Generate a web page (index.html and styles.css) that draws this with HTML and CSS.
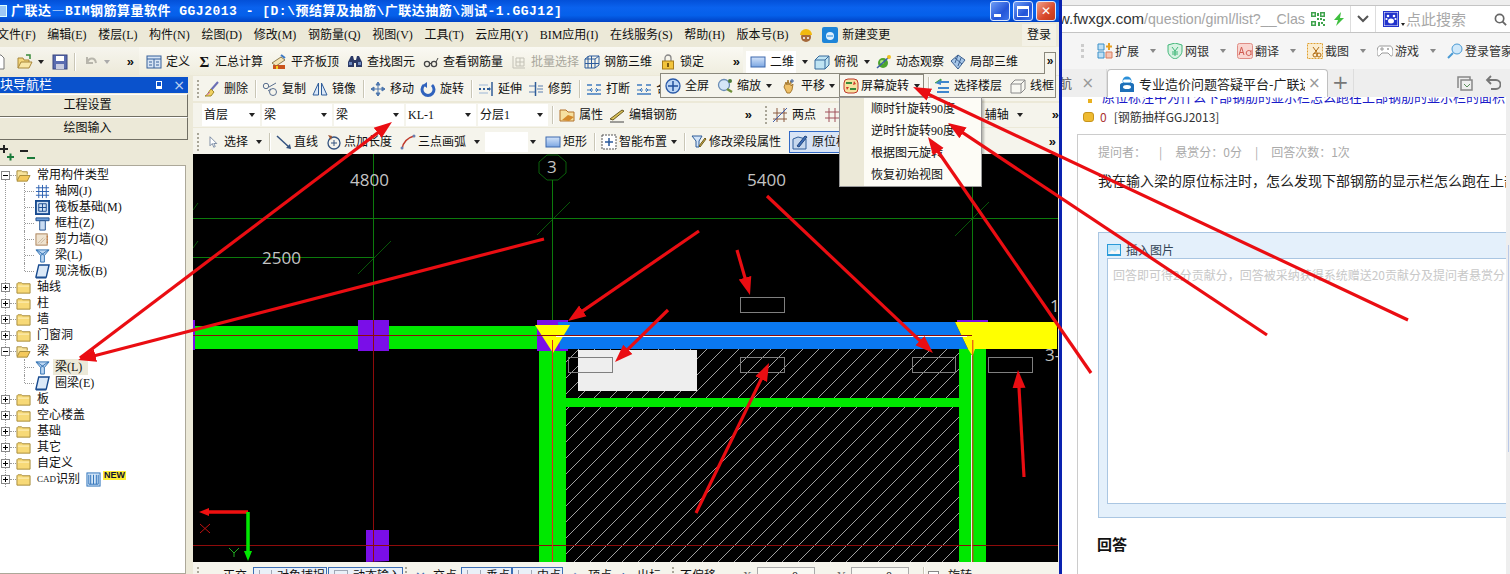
FILE: index.html
```html
<!DOCTYPE html>
<html lang="zh-CN">
<head>
<meta charset="utf-8">
<title>广联达钢筋算量软件</title>
<link rel="stylesheet" href="styles.css">
</head>
<body>
<svg class="sprite" xmlns="http://www.w3.org/2000/svg">
<defs>
<symbol id="i-doc" viewBox="0 0 16 16"><path d="M3 1h7l3 3v11H3z" fill="#fff" stroke="#777"/></symbol>
<symbol id="i-open" viewBox="0 0 16 16"><path d="M1 14V4h5l1 2h5v2" fill="#f4d67a" stroke="#a8873a"/><path d="M1 14l3-6h11l-3 6z" fill="#f9e7a6" stroke="#a8873a"/><path d="M9 1l4 0 0 4" fill="none" stroke="#3a8a3a" stroke-width="1.5"/></symbol>
<symbol id="i-save" viewBox="0 0 16 16"><rect x="1" y="1" width="14" height="14" fill="#5a6cb0" stroke="#38457e"/><rect x="4" y="2" width="8" height="5" fill="#fff"/><rect x="4" y="10" width="8" height="5" fill="#c7cbe0"/></symbol>
<symbol id="i-undo" viewBox="0 0 16 16"><path d="M4 3v6h6" fill="none" stroke="#b8b6ac" stroke-width="2"/><path d="M4 9c2-6 8-6 9 0" fill="none" stroke="#b8b6ac" stroke-width="2"/></symbol>
<symbol id="i-def" viewBox="0 0 16 16"><rect x="1" y="2" width="14" height="12" fill="#d6e4f5" stroke="#37609a"/><path d="M1 5h14M8 5v9M3 8h3M3 11h3M10 8h3M10 11h3" stroke="#37609a" fill="none"/></symbol>
<symbol id="i-align" viewBox="0 0 16 16"><path d="M1 9l9-6 4 3-9 6z" fill="#f3e4b5" stroke="#8a7a50"/><rect x="2" y="11" width="12" height="4" fill="#c9541c"/><path d="M10 1l4 3" stroke="#3b79c4" stroke-width="2"/><rect x="5" y="12" width="2" height="3" fill="#f4d020"/></symbol>
<symbol id="i-find" viewBox="0 0 16 16"><path d="M2 6l2-4h2l1 4v7H1V8zM14 6l-2-4h-2L9 6v7h6V8z" fill="#2c3a66"/><rect x="7" y="6" width="2" height="3" fill="#2c3a66"/><rect x="2" y="8" width="3" height="3" fill="#6f8bc0"/><rect x="11" y="8" width="3" height="3" fill="#6f8bc0"/></symbol>
<symbol id="i-glass" viewBox="0 0 16 16"><circle cx="4" cy="10" r="2.6" fill="none" stroke="#444" stroke-width="1.3"/><circle cx="11" cy="10" r="2.6" fill="none" stroke="#444" stroke-width="1.3"/><path d="M6.5 9.5h2M13 8l2-4" stroke="#444" fill="none"/></symbol>
<symbol id="i-batch" viewBox="0 0 16 16"><path d="M2 2v12h12M5 4h8v8H5zM9 4v8M5 8h8" fill="none" stroke="#c3c1b6"/></symbol>
<symbol id="i-r3d" viewBox="0 0 16 16"><path d="M1 5l4-3h10v9l-4 3H1zM1 5h10v9M11 5l4-3M4 2v12M7.500 2v12M1 9.500h14" fill="none" stroke="#2d5c9c"/></symbol>
<symbol id="i-lock" viewBox="0 0 16 16"><path d="M5 7V4a3 3 0 0 1 6 0v3" fill="none" stroke="#888" stroke-width="1.300"/><rect x="2.500" y="7" width="11" height="8" fill="#f2c43c" stroke="#a67b18"/><rect x="7" y="9" width="2" height="4" fill="#7a5a10"/></symbol>
<symbol id="i-rect" viewBox="0 0 16 16"><defs><linearGradient id="gr" x1="0" y1="0" x2="0" y2="1"><stop offset="0" stop-color="#d4e4f9"/><stop offset="1" stop-color="#7ba6e2"/></linearGradient></defs><rect x="1" y="3" width="14" height="10" fill="url(#gr)" stroke="#3d68ad"/></symbol>
<symbol id="i-cube" viewBox="0 0 16 16"><path d="M1 6l4-4h10v9l-4 4H1z" fill="#bfe3f2" stroke="#366a9c"/><path d="M1 6h10v9M11 6l4-4" fill="none" stroke="#366a9c"/></symbol>
<symbol id="i-orbit" viewBox="0 0 16 16"><circle cx="7" cy="9" r="5" fill="#4ea52e"/><circle cx="6" cy="8" r="2" fill="#b4e68a"/><path d="M1 14L13 3" stroke="#3b5ea8" stroke-width="1.500"/><circle cx="13" cy="3" r="2" fill="#f0c020"/></symbol>
<symbol id="i-local" viewBox="0 0 16 16"><path d="M1 7l7-6 7 5-7 9z" fill="#a7c7e8" stroke="#3c5f8f"/><path d="M5 4l7 6M8 1l-3 8M11 4l-3 8" stroke="#3c5f8f" fill="none"/></symbol>
<symbol id="i-del" viewBox="0 0 16 16"><path d="M14 1L7 9" stroke="#6b6fb5" stroke-width="2"/><path d="M7 8l3 3-3 4H1c3-1 3-4 6-7z" fill="#f0d060" stroke="#a18a2c"/><path d="M3 14l3-3" stroke="#d06ad0"/></symbol>
<symbol id="i-copy" viewBox="0 0 16 16"><circle cx="4" cy="5" r="2.700" fill="none" stroke="#5a6f8f"/><circle cx="11" cy="11" r="3.500" fill="none" stroke="#5a6f8f"/><path d="M7 6l7-4M6 10l3-2" stroke="#5a6f8f" fill="none"/></symbol>
<symbol id="i-mirror" viewBox="0 0 16 16"><path d="M6.500 2v12H1zM9.500 2v12H15z" fill="#dbe8f8" stroke="#2f5d99"/></symbol>
<symbol id="i-move" viewBox="0 0 16 16"><path d="M8 1v14M1 8h14M8 1L6 4h4zM8 15l-2-3h4zM1 8l3-2v4zM15 8l-3-2v4z" fill="#4d76ad" stroke="#4d76ad"/></symbol>
<symbol id="i-rot" viewBox="0 0 16 16"><path d="M4 4a6 6 0 1 0 8 0" fill="none" stroke="#2f62bd" stroke-width="3"/><path d="M7 1v6L3 4z" fill="#2f62bd"/></symbol>
<symbol id="i-ext" viewBox="0 0 16 16"><path d="M1 8h2M5 8h2M9 8h2" stroke="#2f5d99" stroke-width="2"/><path d="M11 6l2 2-2 2z" fill="#2f5d99"/><path d="M14 1v14" stroke="#2f5d99" stroke-width="1.500"/><path d="M1 4h9M1 12h9" stroke="#9cb6d6"/></symbol>
<symbol id="i-trim" viewBox="0 0 16 16"><path d="M1 5h6M1 11h6M9 8h6M10 5h5M10 11h5" stroke="#5a7fb0"/><path d="M7.500 1v14" stroke="#2f5d99" stroke-width="1.500"/></symbol>
<symbol id="i-brk" viewBox="0 0 16 16"><path d="M1 4h5M10 4h5M1 13h14" stroke="#3f7bc0" stroke-width="1.500"/><path d="M1 9h6M9 9h6M6 7l-2 2 2 2M10 7l2 2-2 2" stroke="#3f7bc0" fill="none"/></symbol>
<symbol id="i-prop" viewBox="0 0 16 16"><path d="M1 14V3h6l2 2h6v9z" fill="#f6e0a0" stroke="#b3722c"/><path d="M3 13l6-5 6 2-5 4z" fill="#d48a2c"/></symbol>
<symbol id="i-pen" viewBox="0 0 16 16"><path d="M1 12l3 1L15 4l-2-1z" fill="#d8c15a" stroke="#6a5a20"/><path d="M1 15h14" stroke="#444"/></symbol>
<symbol id="i-two" viewBox="0 0 16 16"><path d="M5 1v14M12 1v14M1 6h14M1 12h14" stroke="#8a5a40" fill="none"/><path d="M1 15L15 1" stroke="#4060b0"/></symbol>
<symbol id="i-hash" viewBox="0 0 16 16"><path d="M5 1v14M11 1v14M1 5h14M1 11h14" stroke="#a0505a" fill="none"/></symbol>
<symbol id="i-cur" viewBox="0 0 16 16"><path d="M4 1v12l3-3 2 5 2-1-2-4h4z" fill="#fff" stroke="#5a6f8f"/></symbol>
<symbol id="i-line" viewBox="0 0 16 16"><path d="M1 2l13 12" stroke="#33527f" stroke-width="1.500"/><path d="M15 15l-5-1 4-4z" fill="#33527f"/></symbol>
<symbol id="i-plen" viewBox="0 0 16 16"><circle cx="8" cy="9" r="6" fill="none" stroke="#33527f" stroke-width="1.300"/><path d="M8 6v6M5 9h6" stroke="#33527f"/><path d="M2 1l4 1-1 4z" fill="#a0522d"/></symbol>
<symbol id="i-arc" viewBox="0 0 16 16"><path d="M2 15C3 8 7 4 14 2" fill="none" stroke="#c0392b" stroke-width="1.500"/><circle cx="2" cy="14" r="1.500" fill="#6a7fb0"/><circle cx="14" cy="2" r="1.500" fill="#6a7fb0"/></symbol>
<symbol id="i-smart" viewBox="0 0 16 16"><rect x="1" y="1" width="14" height="14" fill="#fff" stroke="#555" stroke-dasharray="2 1"/><path d="M8 4v8M4 8h8" stroke="#2a5a9c" stroke-width="1.500"/></symbol>
<symbol id="i-mod" viewBox="0 0 16 16"><path d="M1 2h10L8 7v6H5V7z" fill="#d2e4f8" stroke="#2f5d99"/><path d="M8 12l6-8 1 1-6 8z" fill="#d8b54a" stroke="#6a5a20"/></symbol>
<symbol id="i-orig" viewBox="0 0 16 16"><path d="M1 5l5-2 8 2v10H1z" fill="#c7d8ee" stroke="#2f5d99"/><path d="M5 12l8-10 2 1-8 10z" fill="#3f6fb8" stroke="#23487f"/></symbol>
<symbol id="i-full" viewBox="0 0 16 16"><circle cx="8" cy="8" r="7" fill="#bcd6f5" stroke="#2a5aa8" stroke-width="1.300"/><path d="M8 3v10M3 8h10" stroke="#1f4f9c" stroke-width="1.500"/></symbol>
<symbol id="i-zoom" viewBox="0 0 16 16"><circle cx="7" cy="7" r="5.500" fill="#d4e6f7" stroke="#6a8db5" stroke-width="1.300"/><path d="M10 11l5 3" stroke="#6f8f3a" stroke-width="2.500"/><circle cx="13" cy="3" r="2" fill="#4a7a3a"/></symbol>
<symbol id="i-pan" viewBox="0 0 16 16"><path d="M3 9l2-5 1 3 1-5 1 5 2-4v5l2-2-1 6-2 3H6z" fill="#efc067" stroke="#a67a30"/><path d="M11 1v4M9 3h4" stroke="#3a5f99"/></symbol>
<symbol id="i-srot" viewBox="0 0 16 16"><rect x="1" y="1" width="14" height="14" rx="4" fill="#f6e3a0" stroke="#c0392b"/><path d="M3 5h6M13 11H7" stroke="#3b8a3b" stroke-width="2"/><path d="M11 3l2 3-3 1zM4 12l-1-3 3 0z" fill="#d23a2a"/></symbol>
<symbol id="i-floor" viewBox="0 0 16 16"><path d="M1 5l6-4v2h8v2H7v2zM4 9h11v2H4zM3 13h12v2H3z" fill="#3f86cc"/><path d="M1 5l6-4v2" fill="none" stroke="#3f9f3f"/></symbol>
<symbol id="i-wire" viewBox="0 0 16 16"><path d="M1 6l4-4h10v9l-4 4H1zM1 6h10v9M11 6l4-4" fill="#f8f8f2" stroke="#8a8a8a"/></symbol>
<symbol id="i-folder" viewBox="0 0 16 16"><path d="M1 4l1-1h4l1 1h8v10H1z" fill="#f7d977" stroke="#a58a3a"/><path d="M2 6h12v1H2z" fill="#fdf2c4"/></symbol>
<symbol id="i-folderopen" viewBox="0 0 16 16"><path d="M1 13V3h5l1 1h5v3" fill="#f7e39c" stroke="#a58a3a"/><path d="M1 14l3-6h11l-3 6z" fill="#f4c95c" stroke="#a58a3a"/></symbol>
<symbol id="i-gridt" viewBox="0 0 16 16"><path d="M1 4h14M1 8h14M1 12h14M4 1v14M8 1v14M12 1v14" stroke="#2a5fb0" fill="none"/></symbol>
<symbol id="i-raft" viewBox="0 0 16 16"><rect x="1" y="1" width="14" height="14" fill="#cfe0f4" stroke="#174a8f" stroke-width="2"/><path d="M4 4h8v8H4zM8 4v8M4 8h8" fill="none" stroke="#174a8f"/></symbol>
<symbol id="i-col" viewBox="0 0 16 16"><path d="M1 2h14v3H1z" fill="#6a9bd8" stroke="#1f4f8f"/><path d="M5 5h6v10H5z" fill="#c9dcf3" stroke="#1f4f8f"/></symbol>
<symbol id="i-wall" viewBox="0 0 16 16"><rect x="1" y="2" width="12" height="12" fill="#efe3d0" stroke="#a97f55"/><path d="M3 12l6-6M6 12l5-5" stroke="#c8b8a0"/><path d="M13 4v9" stroke="#c06a2a" stroke-dasharray="2 1"/></symbol>
<symbol id="i-beam" viewBox="0 0 16 16"><path d="M1 2h14l-5 6v7H6V8z" fill="#bcd7f3" stroke="#2f6fb0"/><path d="M6 8l8-6M10 8L2 2" stroke="#2f6fb0" fill="none"/></symbol>
<symbol id="i-slab" viewBox="0 0 16 16"><path d="M4 1h11l-3 13H1z" fill="#dbe9f8" stroke="#174a8f" stroke-width="1.500"/><path d="M1 14h11v1.500H1z" fill="#174a8f"/></symbol>
<symbol id="i-book" viewBox="0 0 16 16"><rect x="1" y="1" width="14" height="14" fill="#d3e6f8" stroke="#2a6fb8"/><path d="M5 3v10M8 3v10M11 3v10M3 3v10h10V3" stroke="#2a6fb8" fill="none"/></symbol>
</defs>
</svg>

<div class="page">
  <div class="app">
    <div class="titlebar">
      <span class="title-logo"></span>
      <span class="title-text">广联达<span class="dash">—</span>BIM钢筋算量软件 GGJ2013 - [D:\预结算及抽筋\广联达抽筋\测试-1.GGJ12]</span>
      <span class="winbtns">
        <span class="winbtn"><span class="gl-min"></span></span>
        <span class="winbtn"><span class="gl-max"></span></span>
        <span class="winbtn close">✕</span>
      </span>
    </div>

    <div class="menubar">
      <span class="mi first">文件(F)</span><span class="mi">编辑(E)</span><span class="mi">楼层(L)</span><span class="mi">构件(N)</span><span class="mi">绘图(D)</span><span class="mi">修改(M)</span><span class="mi">钢筋量(Q)</span><span class="mi">视图(V)</span><span class="mi">工具(T)</span><span class="mi">云应用(Y)</span><span class="mi">BIM应用(I)</span><span class="mi">在线服务(S)</span><span class="mi">帮助(H)</span><span class="mi">版本号(B)</span>
      <svg class="helmet" viewBox="0 0 16 16"><circle cx="8" cy="10" r="5" fill="#a5683a"/><path d="M2 8a6 6 0 0 1 12 0z" fill="#f2b90f"/><circle cx="6" cy="11" r="1" fill="#fff"/><circle cx="10" cy="11" r="1" fill="#fff"/></svg>
      <svg class="cloud" viewBox="0 0 16 16"><rect width="16" height="16" rx="2" fill="#1d84d8"/><circle cx="8" cy="9" r="4" fill="#dff1ff"/><path d="M5 9h6" stroke="#1d84d8"/></svg>
      <span class="mi-plain">新建变更</span>
      <span class="login">登录</span>
    </div>

    <div class="toolrow">
      <div class="ts ts-file">
        <svg class="ic clip-doc"><use href="#i-doc"/></svg>
        <svg class="ic"><use href="#i-open"/></svg><i class="dd"></i>
        <svg class="ic ic-save"><use href="#i-save"/></svg>
        <i class="sep"></i>
        <svg class="ic"><use href="#i-undo"/></svg><i class="dd off"></i>
        <b class="more push">»</b>
      </div>
      <div class="ts ts-main">
        <span class="it"><svg class="ic"><use href="#i-def"/></svg>定义</span>
        <span class="it"><b class="sigma">Σ</b>汇总计算</span>
        <span class="it"><svg class="ic"><use href="#i-align"/></svg>平齐板顶</span>
        <span class="it"><svg class="ic"><use href="#i-find"/></svg>查找图元</span>
        <span class="it"><svg class="ic"><use href="#i-glass"/></svg>查看钢筋量</span>
        <span class="it off"><svg class="ic"><use href="#i-batch"/></svg>批量选择</span>
        <span class="it tight"><svg class="ic"><use href="#i-r3d"/></svg>钢筋三维</span>
        <span class="it"><svg class="ic"><use href="#i-lock"/></svg>锁定</span>
        <b class="more push">»</b>
      </div>
      <div class="ts ts-view">
        <span class="it boxed"><svg class="ic"><use href="#i-rect"/></svg>二维</span><i class="dd"></i>
        <span class="it"><svg class="ic"><use href="#i-cube"/></svg>俯视</span><i class="dd"></i>
        <span class="it"><svg class="ic"><use href="#i-orbit"/></svg>动态观察</span>
        <span class="it"><svg class="ic"><use href="#i-local"/></svg>局部三维</span>
      </div>
    </div>

    <div class="main">
      <aside class="side">
        <div class="side-head"><span>块导航栏</span><span class="side-ctl"><i class="pin"></i><span class="side-x">×</span></span></div>
        <div class="side-btn first-btn">工程设置</div>
        <div class="side-btn">绘图输入</div>
        <div class="side-tools">
          <svg class="pm" viewBox="0 0 36 18"><path d="M0 5h8M4 1v8" stroke="#222" stroke-width="2"/><path d="M7 13h7M10.500 9.500v7" stroke="#1a7a3a" stroke-width="2"/><path d="M20 7h8" stroke="#222" stroke-width="2"/><path d="M27 14h8" stroke="#1a7a3a" stroke-width="2"/></svg>
        </div>
        <div class="tree">
          <div class="tr"><i class="exp minus"></i><svg class="ic fd"><use href="#i-folderopen"/></svg>常用构件类型</div>
          <div class="tr kid"><svg class="ic"><use href="#i-gridt"/></svg>轴网(J)</div>
          <div class="tr kid"><svg class="ic"><use href="#i-raft"/></svg>筏板基础(M)</div>
          <div class="tr kid"><svg class="ic"><use href="#i-col"/></svg>框柱(Z)</div>
          <div class="tr kid"><svg class="ic"><use href="#i-wall"/></svg>剪力墙(Q)</div>
          <div class="tr kid"><svg class="ic"><use href="#i-beam"/></svg>梁(L)</div>
          <div class="tr kid last"><svg class="ic"><use href="#i-slab"/></svg>现浇板(B)</div>
          <div class="tr"><i class="exp"></i><svg class="ic fd"><use href="#i-folder"/></svg>轴线</div>
          <div class="tr"><i class="exp"></i><svg class="ic fd"><use href="#i-folder"/></svg>柱</div>
          <div class="tr"><i class="exp"></i><svg class="ic fd"><use href="#i-folder"/></svg>墙</div>
          <div class="tr"><i class="exp"></i><svg class="ic fd"><use href="#i-folder"/></svg>门窗洞</div>
          <div class="tr"><i class="exp minus"></i><svg class="ic fd"><use href="#i-folderopen"/></svg>梁</div>
          <div class="tr kid"><svg class="ic"><use href="#i-beam"/></svg><span class="tsel">梁(L)</span></div>
          <div class="tr kid last"><svg class="ic"><use href="#i-slab"/></svg>圈梁(E)</div>
          <div class="tr"><i class="exp"></i><svg class="ic fd"><use href="#i-folder"/></svg>板</div>
          <div class="tr"><i class="exp"></i><svg class="ic fd"><use href="#i-folder"/></svg>空心楼盖</div>
          <div class="tr"><i class="exp"></i><svg class="ic fd"><use href="#i-folder"/></svg>基础</div>
          <div class="tr"><i class="exp"></i><svg class="ic fd"><use href="#i-folder"/></svg>其它</div>
          <div class="tr"><i class="exp"></i><svg class="ic fd"><use href="#i-folder"/></svg>自定义</div>
          <div class="tr"><i class="exp"></i><svg class="ic fd"><use href="#i-folder"/></svg><span class="cad-abbr">CAD</span>识别<svg class="ic book"><use href="#i-book"/></svg><span class="newb">NEW</span></div>
        </div>
      </aside>

      <section class="work">
        <div class="row row-a">
          <i class="grip"></i>
          <span class="it"><svg class="ic"><use href="#i-del"/></svg>删除</span><i class="sep"></i>
          <span class="it"><svg class="ic"><use href="#i-copy"/></svg>复制</span>
          <span class="it"><svg class="ic"><use href="#i-mirror"/></svg>镜像</span><i class="sep"></i>
          <span class="it"><svg class="ic"><use href="#i-move"/></svg>移动</span>
          <span class="it"><svg class="ic"><use href="#i-rot"/></svg>旋转</span><i class="sep"></i>
          <span class="it"><svg class="ic"><use href="#i-ext"/></svg>延伸</span>
          <span class="it"><svg class="ic"><use href="#i-trim"/></svg>修剪</span><i class="sep"></i>
          <span class="it"><svg class="ic"><use href="#i-brk"/></svg>打断</span>
          <span class="it"><svg class="ic"><use href="#i-brk"/></svg>合并</span>
        </div>

        <div class="row row-b">
          <div class="rs rs-left">
            <span class="sel">首层<i class="dd"></i></span>
            <span class="sel">梁<i class="dd"></i></span>
            <span class="sel">梁<i class="dd"></i></span>
            <span class="sel">KL-1<i class="dd"></i></span>
            <span class="sel">分层1<i class="dd"></i></span>
            <i class="sep"></i>
            <span class="it"><svg class="ic"><use href="#i-prop"/></svg>属性</span>
            <span class="it"><svg class="ic"><use href="#i-pen"/></svg>编辑钢筋</span>
            <b class="more push">»</b>
          </div>
          <div class="rs rs-right">
            <i class="grip"></i>
            <span class="it"><svg class="ic"><use href="#i-two"/></svg>两点</span>
            <svg class="ic"><use href="#i-hash"/></svg>
            <span class="it push">辅轴</span><i class="dd"></i>
            <b class="more edge-more">»</b>
          </div>
        </div>

        <div class="row row-c">
          <i class="grip"></i>
          <span class="it narrow"><svg class="ic"><use href="#i-cur"/></svg>选择</span><i class="dd"></i><i class="sep"></i>
          <span class="it"><svg class="ic"><use href="#i-line"/></svg>直线</span>
          <span class="it"><svg class="ic"><use href="#i-plen"/></svg>点加长度</span>
          <span class="it"><svg class="ic"><use href="#i-arc"/></svg>三点画弧</span><i class="dd"></i>
          <span class="blank"></span><i class="dd"></i>
          <span class="it"><svg class="ic"><use href="#i-rect"/></svg>矩形</span><i class="sep"></i>
          <span class="it"><svg class="ic"><use href="#i-smart"/></svg>智能布置</span><i class="dd dd-near"></i><i class="sep"></i>
          <span class="it"><svg class="ic"><use href="#i-mod"/></svg>修改梁段属性</span>
          <span class="it active"><svg class="ic"><use href="#i-orig"/></svg>原位标注</span>
          <b class="more push">»</b>
        </div>

        <svg class="cad" viewBox="193 154 865 408" xmlns="http://www.w3.org/2000/svg">
          <defs>
            <pattern id="hatch" width="16" height="16" patternUnits="userSpaceOnUse"><path d="M-1 17L17 -1" stroke="#c8c8c8" stroke-width=".8"/></pattern>
          </defs>
          <rect x="193" y="154" width="865" height="408" fill="#000"/>
          <g stroke="#0c7a0c" fill="none">
            <path d="M193 218.500H1058M193 257.500H373M373.500 154V320M552.500 180V320M972.500 154V320"/>
            <path d="M547 155h11l8 7v11l-8 7h-11l-8-7v-11z" stroke-width=".8"/>
          </g>
          <path d="M537 235l33-33M358 274l33-33M955 236l34-34M193 210l5-7M193 248l5-7" stroke="#0c7a0c" stroke-width=".7" fill="none"/>
          <g class="cad-num">
            <text x="350" y="186">4800</text>
            <text x="262" y="264">2500</text>
            <text x="747" y="186">5400</text>
            <text x="547" y="173">3</text>
            <text x="1050" y="312">1</text>
            <text x="1045" y="361">3-</text>
          </g>
          <rect x="566" y="349" width="393" height="213" fill="url(#hatch)"/>
          <rect x="578" y="350" width="119" height="41" fill="#eee"/>
          <g fill="#00e800">
            <rect x="195" y="326" width="342" height="23"/>
            <rect x="539" y="349" width="27" height="213"/>
            <rect x="959" y="349" width="27" height="213"/>
            <rect x="566" y="398" width="393" height="9"/>
          </g>
          <g fill="#7a0ee8">
            <rect x="193" y="320" width="2" height="30"/>
            <rect x="358" y="320" width="31" height="31"/>
            <rect x="537" y="320" width="31" height="31"/>
            <rect x="957" y="320" width="31" height="2"/>
            <path d="M366 530h23v31l-23 1z"/>
          </g>
          <path d="M558 322H955L968 349H560z" fill="#0a78f0"/>
          <path d="M955 322H1057V349H975L972.500 356 968 349z" fill="#ff0"/>
          <path d="M535 325H570L553 353z" fill="#ff0"/>
          <path d="M556 336.500H967" stroke="#fff" stroke-width="1"/>
          <g fill="none" stroke="#8e0b0b">
            <path d="M193 545.500H1058M373.500 320V562M193 335.500H972"/>
          </g>
          <path d="M552.500 340V562M972.800 340V562" stroke="#e02a1a"/>
          <path d="M971.500 355V562" stroke="#eee"/>
          <g fill="none" stroke="#7f7f7f">
            <rect x="740.500" y="297.500" width="44" height="15"/>
            <rect x="568.500" y="357.500" width="44" height="15"/>
            <rect x="740.500" y="357.500" width="44" height="15"/>
            <rect x="912.500" y="357.500" width="43" height="15"/>
            <rect x="988.500" y="357.500" width="44" height="15"/>
          </g>
          <path d="M248 512H208" stroke="#f01010" stroke-width="3.500"/>
          <path d="M199 512l10-4v8z" fill="#f01010"/>
          <path d="M248 512V552" stroke="#00e800" stroke-width="3.500"/>
          <path d="M248 561l-4-10h8z" fill="#00e800"/>
          <path d="M200 524l10 9M210 524l-10 9" stroke="#c01010" fill="none"/>
          <path d="M229 548l5 5 5-5M234 553v4" stroke="#1faa1f" fill="none"/>
        </svg>

        <div class="status">
          <i class="grip"></i>
          <span class="st st-ortho"><i class="st-red"></i>正交</span>
          <span class="st st-box st-a"><i class="st-mark"></i>对象捕捉</span>
          <span class="st st-box st-b"><i class="st-mark wide"></i>动态输入</span>
          <i class="grip g2"></i>
          <span class="st st-c"><i class="st-x">✕</i>交点</span>
          <span class="st st-box st-d"><i class="st-mark"></i>垂点</span>
          <span class="st st-box st-e"><i class="st-mark"></i>中点</span>
          <span class="st st-f"><i class="st-x">◇</i>顶点</span>
          <span class="st st-f"><i class="st-x">∴</i>出标</span>
          <i class="grip g3"></i>
          <span class="st st-g">不偏移</span>
          <span class="st st-h">X</span><span class="spin">0</span>
          <span class="st st-h">Y</span><span class="spin">0</span>
          <i class="sep s-st"></i><i class="chk"></i>
          <span class="st st-i">旋转</span>
          <b class="more push">»</b>
        </div>
      </section>
    </div>
  </div>
  <div class="win-edge"></div>

  <div class="browser">
    <div class="b-top"></div>
    <div class="addr">
      <div class="url"><span class="url-t"><span class="url-host">w.fwxgx.com</span>/question/giml/list?__Clas</span>
        <svg class="qr" viewBox="0 0 14 14"><path d="M0 0h5v5H0zM9 0h5v5H9zM0 9h5v5H0z" fill="#3fa34d"/><path d="M1.500 1.500h2v2h-2zM10.500 1.500h2v2h-2zM1.500 10.500h2v2h-2z" fill="#fff"/><path d="M6 1h2v3H6zM6 6h2v2H6zM9 6h2v2H9zM12 7h2v2h-2zM7 10h2v4H7zM10 10h2v2h-2zM12 12h2v2h-2z" fill="#3fa34d"/></svg>
        <svg class="bolt" viewBox="0 0 12 14"><path d="M8 0L1 8h4l-2 6 8-8H7z" fill="#3fbf3f"/></svg>
      </div>
      <div class="chev"><svg viewBox="0 0 12 8"><path d="M1 1l5 5 5-5" fill="none" stroke="#555" stroke-width="2"/></svg></div>
      <div class="srch">
        <svg class="paw" viewBox="0 0 16 16"><rect x=".5" y=".5" width="15" height="15" fill="#fff" stroke="#2233cc"/><rect x="1.500" y="1.500" width="13" height="13" fill="#2233cc"/><circle cx="5" cy="5" r="1.300" fill="#fff"/><circle cx="11" cy="5" r="1.300" fill="#fff"/><circle cx="3.500" cy="8" r="1.100" fill="#fff"/><circle cx="12.500" cy="8" r="1.100" fill="#fff"/><ellipse cx="8" cy="10" rx="3" ry="2.500" fill="#fff"/></svg>
        <i class="dd paw-dd"></i>
        <span class="srch-t">点此搜索</span>
        <svg class="mag" viewBox="0 0 14 14"><circle cx="6" cy="6" r="4.500" fill="none" stroke="#666" stroke-width="1.800"/><path d="M9 9l4 4" stroke="#666" stroke-width="2"/></svg>
      </div>
    </div>
    <div class="btools">
      <i class="bgrip"></i>
      <span class="bt"><svg class="bi" viewBox="0 0 16 16"><path d="M1 1h6v6H1zM1 9h6v6H1z" fill="#bfe0f5" stroke="#3a8fc8"/><path d="M9 9h6v6H9z" fill="#f5c5b5" stroke="#d87a5a"/><path d="M12 0v7M9 3.500h6" stroke="#e8a020" stroke-width="2"/></svg>扩展</span><i class="dd bd"></i>
      <span class="bt"><svg class="bi" viewBox="0 0 16 16"><path d="M8 0l7 2v6c0 4-4 7-7 8-3-1-7-4-7-8V2z" fill="#d7f2e2" stroke="#41b678"/><path d="M5 4l3 4 3-4M8 8v5M5 9h6M5 11h6" fill="none" stroke="#41b678"/></svg>网银</span><i class="dd bd"></i>
      <span class="bt"><svg class="bi" viewBox="0 0 16 16"><rect x=".5" y=".5" width="15" height="15" rx="2" fill="#f9d5d0" stroke="#e08d85"/><path d="M2 12l2.500-8L7 12M3 9.500h3M14 7v5M14 9a2.500 2.500 0 1 0 0 2" fill="none" stroke="#d05a50"/></svg>翻译</span><i class="dd bd"></i>
      <span class="bt"><svg class="bi" viewBox="0 0 16 16"><rect x=".5" y=".5" width="15" height="15" fill="#fbedd0" stroke="#e0a030" stroke-dasharray="2 1"/><circle cx="8" cy="12" r="2" fill="none" stroke="#b06a10"/><circle cx="12" cy="12" r="2" fill="none" stroke="#b06a10"/><path d="M6 4l5 7M12 4l-5 7" stroke="#b06a10"/></svg>截图</span><i class="dd bd"></i>
      <span class="bt"><svg class="bi" viewBox="0 0 16 16"><path d="M3 3h10c2 0 3 3 3 7 0 3-2 4-3 2l-2-2H5l-2 2c-1 2-3 1-3-2 0-4 1-7 3-7z" fill="#fff" stroke="#999"/><circle cx="11" cy="6" r="1" fill="#999"/><path d="M3 6h4M5 4v4" stroke="#999"/></svg>游戏</span><i class="dd bd"></i>
      <span class="bt"><svg class="bi" viewBox="0 0 16 16"><circle cx="10" cy="6" r="5" fill="#cfe8fa" stroke="#4a9ad4"/><path d="M6 10l-5 5" stroke="#4a9ad4" stroke-width="2"/></svg>登录管家</span>
    </div>
    <div class="tabs">
      <span class="tab-old"><span class="tab-old-t">航</span><span class="tab-x">×</span></span>
      <span class="tab">
        <svg class="fav" viewBox="0 0 16 16"><circle cx="8" cy="5" r="4.500" fill="#2a8fd8"/><path d="M1 16V9c0-1 1-2 2-2h10c1 0 2 1 2 2v7z" fill="#1d6fb8"/><ellipse cx="8" cy="11" rx="4" ry="2" fill="#fff"/><rect x="4" y="3.500" width="8" height="3" rx="1.500" fill="#fff"/></svg>
        <span class="tab-t">专业造价问题答疑平台-广联达服务新干线</span>
        <span class="tab-x">×</span>
      </span>
      <span class="tab-plus">+</span>
      <span class="tab-tools">
        <svg viewBox="0 0 16 16"><path d="M1 13V2h12v3M4 5h11v10H4z" fill="none" stroke="#888" stroke-width="1.500"/><path d="M7 9l3 3 3-3" fill="none" stroke="#5a8f5a"/></svg>
        <svg viewBox="0 0 16 16"><path d="M3 5h8a4 4 0 0 1 0 9H6" fill="none" stroke="#777" stroke-width="1.800"/><path d="M6 1L2 5l4 4" fill="none" stroke="#777" stroke-width="1.800"/></svg>
      </span>
    </div>
    <div class="content">
      <div class="inner">
        <div class="q-title"><i class="bullet"></i><span>原位标注中为什么下部钢筋的显示栏怎么跑在上部钢筋的显示栏的面积</span></div>
        <div class="q-tag"><i class="coin"></i><span class="q-zero">0</span><span>[钢筋抽样GGJ2013]</span></div>
        <div class="card">
          <div class="meta"><span>提问者：</span><span>|</span><span>悬赏分：0分</span><span>|</span><span>回答次数：1次</span></div>
          <p class="body-t">我在输入梁的原位标注时，怎么发现下部钢筋的显示栏怎么跑在上部钢筋的显示栏的面积</p>
          <div class="editor">
            <div class="ed-head"><svg class="ed-ic" viewBox="0 0 14 12"><rect width="14" height="12" fill="#2a9ad8"/><rect x="1" y="1" width="12" height="9" fill="#bfe6fa"/><path d="M1 10l4-4 3 2 3-3 2 2v3z" fill="#f7f7f7"/></svg>插入图片</div>
            <div class="ed-box">回答即可得2分贡献分，回答被采纳获得系统赠送20贡献分及提问者悬赏分</div>
          </div>
          <h3 class="ans">回答</h3>
        </div>
      </div>
      <div class="pagebar"><i class="pagethumb"></i></div>
    </div>
  </div>

  <div class="float-tb">
    <span class="it"><svg class="ic"><use href="#i-full"/></svg>全屏</span>
    <span class="it"><svg class="ic"><use href="#i-zoom"/></svg>缩放</span><i class="dd"></i>
    <span class="it"><svg class="ic"><use href="#i-pan"/></svg>平移</span><i class="dd dd-b"></i>
    <span class="it open"><svg class="ic"><use href="#i-srot"/></svg>屏幕旋转<i class="dd"></i></span>
    <i class="sep"></i>
    <span class="it ft-floor"><svg class="ic"><use href="#i-floor"/></svg>选择楼层</span>
    <span class="it"><svg class="ic"><use href="#i-wire"/></svg>线框</span>
  </div>
  <b class="float-more">»</b>

  <div class="dropdown">
    <div class="dm">顺时针旋转90度</div>
    <div class="dm">逆时针旋转90度</div>
    <div class="dm">根据图元旋转</div>
    <div class="dm">恢复初始视图</div>
  </div>

  <svg class="arrows" viewBox="0 0 1510 574" xmlns="http://www.w3.org/2000/svg">
    <defs>
      <marker id="head" markerUnits="userSpaceOnUse" markerWidth="20" markerHeight="16" refX="4" refY="8" orient="auto">
        <path d="M0 1.500L18 8L0 14.500z" fill="#ea0d12"/>
      </marker>
    </defs>
    <g class="arrow-lines">
      <line x1="544" y1="239" x2="91.600" y2="356.500"/>
      <line x1="80" y1="358" x2="380.800" y2="130.500"/>
      <line x1="699" y1="231" x2="579.500" y2="313.100"/>
      <line x1="668" y1="310" x2="625" y2="352.200"/>
      <line x1="737" y1="250" x2="746.100" y2="281.600"/>
      <line x1="767" y1="196" x2="922.800" y2="343.400"/>
      <line x1="696" y1="513" x2="762.900" y2="375.600"/>
      <line x1="1024" y1="477" x2="1018.800" y2="384"/>
      <line x1="1408" y1="320" x2="925.700" y2="93"/>
      <line x1="1267" y1="335" x2="959.700" y2="130.700"/>
      <line x1="1091" y1="373" x2="936" y2="148.500"/>
    </g>
  </svg>
</div>
</body>
</html>
```

FILE: styles.css
```css
* { box-sizing: border-box; }
html, body { margin: 0; padding: 0; }
body {
  width: 1510px; height: 574px; overflow: hidden;
  font-family: "Liberation Serif", "Noto Sans CJK SC", serif;
  font-size: 12px; color: #111; line-height: 16px;
}
i { font-style: normal; }
.sprite { position: absolute; width: 0; height: 0; }
.page { position: relative; width: 1510px; height: 574px; display: flex; overflow: hidden; }

/* ---------- application window ---------- */
.app { width: 1059px; height: 574px; flex: none; display: flex; flex-direction: column; background: #ece9d8; overflow: hidden; }
.win-edge { width: 3px; flex: none; background: #0a22b0; }

.titlebar {
  height: 22px; flex: none; display: flex; align-items: center; padding-left: 0;
  background: linear-gradient(#0350d8, #0a62ee 35%, #0560ea 70%, #0042c4);
  color: #fff;
}
.title-logo { width: 7px; height: 12px; background: #9cc8f5; border: 1px solid #dff; border-left: 0; flex: none; }
.title-text {
  margin-left: 4px; white-space: nowrap;
  font: bold 13px/22px "Liberation Mono", "Noto Sans CJK SC", monospace; letter-spacing: .5px;
}
.dash { font-family: "Noto Sans CJK SC", sans-serif; }
.winbtns { margin-left: auto; margin-right: 3px; display: flex; gap: 3px; }
.winbtn {
  width: 20px; height: 20px; border: 1px solid #dbe8ff; border-radius: 3px;
  background: linear-gradient(135deg, #6d9cf5, #2455d8 60%, #3d74ea);
  color: #fff; display: flex; align-items: center; justify-content: center; font-size: 12px; font-weight: bold;
  font-family: "DejaVu Sans", sans-serif;
}
.winbtn.close { background: linear-gradient(135deg, #f0a088, #d8482a 60%, #c03818); }
.gl-min { width: 7px; height: 3px; background: #fff; align-self: flex-end; margin: 0 6px 3px 0; }
.gl-max { width: 12px; height: 11px; border: 1px solid #fff; border-top-width: 3px; }

.menubar { height: 25px; flex: none; display: flex; align-items: center; gap: 11.6px; background: #ece9d8; padding: 1px 0 0; white-space: nowrap; }
.mi.first { margin-left: -3px; }
.helmet { width: 16px; height: 16px; margin-left: -2px; }
.cloud { width: 16px; height: 16px; margin-left: -4px; }
.mi-plain { margin-left: -7px; }
.login { margin-left: auto; margin-right: 3px; width: 34px; height: 22px; line-height: 22px; text-align: center; background: #f3f1e6; }

.toolrow { height: 29px; flex: none; display: flex; background: linear-gradient(#f6f5ee, #ece9d8); white-space: nowrap; }
.ts { display: flex; align-items: center; height: 28px; padding-top: 2px; }
.ts-file { width: 139px; }
.ts-main { width: 604px; padding-left: 7px; background: linear-gradient(#faf9f3, #efedde); gap: 8px; }
.ts-view { flex: 1; padding-left: 3px; gap: 6px; background: #f5f4ec; }
.clip-doc { margin-left: -9px; }
.ts-file .ic + .ic { margin-left: 10px; }
.ts-file .dd { margin-left: 5px; }
.ic-save { margin-left: 8px; }
.ts-file .sep { margin: 0 8px 0 6px; }
.push { margin-left: auto; }
.ts-main .push { margin-right: 3px; }
.ts-file .push { margin-right: 5px; }
.tight { margin-left: -3px; }
.boxed { background: #fff; padding: 0 2px 0 4px; height: 22px; }
.sigma { width: 13px; font: bold 15px "Liberation Serif", serif; text-align: center; }

.it { display: inline-flex; align-items: center; gap: 4px; white-space: nowrap; flex: none; }
.it.off { color: #a9a79c; }
.ic { width: 16px; height: 16px; flex: none; display: block; }
.dd { width: 0; height: 0; flex: none; display: inline-block; border: 3px solid transparent; border-top: 4px solid #222; border-bottom: 0; }
.dd.off { border-top-color: #aaa; }
.sep { width: 1px; height: 18px; flex: none; background: #c9c6b6; box-shadow: 1px 0 0 #fff; }
.more { font: bold 13px/12px "Liberation Sans", sans-serif; flex: none; }
.grip { width: 2px; height: 18px; flex: none; border-left: 2px dotted #a9a698; }

/* ---------- sidebar ---------- */
.main { flex: 1; min-height: 0; display: flex; gap: 5px; }
.side { width: 188px; flex: none; display: flex; flex-direction: column; }
.side-head { height: 16px; margin-top: 1px; flex: none; display: flex; justify-content: space-between; align-items: center; background: #0a52cc; color: #fff; font-size: 13px; }
.side-ctl { display: flex; align-items: center; gap: 11px; margin-right: 3px; }
.pin { width: 6px; height: 8px; border: 1px solid #fff; border-bottom-width: 3px; }
.side-x { font: 14px/14px "DejaVu Sans", sans-serif; opacity: .75; }
.side-btn { height: 23px; flex: none; line-height: 21px; text-align: center; background: #ece9d8; border: 1px solid #fff; border-right-color: #716f64; border-bottom-color: #716f64; border-left: 0; padding-right: 12px; }
.first-btn { margin-top: 1px; }
.side-tools { height: 25px; flex: none; display: flex; align-items: center; }
.pm { width: 36px; height: 18px; display: block; }
.tree { flex: 1; width: 186px; background: #fff; border: 1px solid #aca899; border-left: 0; padding-top: 1px; position: relative; }
.tree::before { content: ""; position: absolute; left: 5px; top: 9px; height: 312px; border-left: 1px dotted #999; }
.tr { height: 16px; display: flex; align-items: center; white-space: nowrap; line-height: 16px; position: relative; }
.tr .ic { width: 15px; height: 15px; }
.fd { margin-left: 6px; margin-right: 6px; }
.tr:not(.kid)::before { content: ""; position: absolute; left: 10px; top: 8px; width: 6px; border-top: 1px dotted #999; }
.tr.kid { padding-left: 35px; }
.tr.kid .ic { margin-right: 5px; }
.tr.kid::before { content: ""; position: absolute; left: 25px; top: 8px; width: 9px; border-top: 1px dotted #999; }
.tr.kid::after { content: ""; position: absolute; left: 24px; top: 0; bottom: 0; border-left: 1px dotted #999; }
.tr.kid.last::after { bottom: 8px; }
.exp { width: 9px; height: 9px; margin-left: 1px; flex: none; background: #fff; border: 1px solid #888; position: relative; z-index: 1; }
.exp::before { content: ""; position: absolute; left: 1px; right: 1px; top: 3px; height: 1px; background: #000; }
.exp::after { content: ""; position: absolute; top: 1px; bottom: 1px; left: 3px; width: 1px; background: #000; }
.exp.minus::after { display: none; }
.tsel { background: #ece9d8; padding-right: 6px; margin-left: -2px; padding-left: 2px; }
.cad-abbr { font-size: 9px; }
.tr .book { margin-left: 6px; margin-right: 2px; width: 15px; height: 15px; }
.newb { font: bold 9px/9px "Liberation Sans", sans-serif; background: #ffee33; color: #113; padding: 0 1px; margin-top: -7px; }

/* ---------- workspace ---------- */
.work { flex: 1; min-width: 0; display: flex; flex-direction: column; }
.row { flex: none; display: flex; align-items: center; white-space: nowrap; }
.row-a { height: 25px; padding: 1px 0 0 4px; background: #f5f4ec; }
.row-a .grip { margin-right: 5px; }
.row-a .it + .it { margin-left: 6px; }
.row-a .sep { margin: 0 6px 0 7px; }
.row-b { height: 27px; background: #ece9d8; padding-top: 1px; }
.rs { display: flex; align-items: center; height: 24px; background: #f5f4ec; }
.rs-left { width: 569px; padding-left: 9px; }
.rs-left .sep { margin: 0 6px 0 2px; }
.rs-left .it + .it { margin-left: 6px; }
.rs-left .push { margin-right: 10px; }
.rs-right { flex: 1; padding-left: 3px; }
.rs-right .grip { margin-right: 5px; }
.rs-right .it { margin-right: 8px; }
.edge-more { margin-left: 29px; }
.sel { width: 70px; height: 22px; margin-right: 2px; background: #fff; display: flex; align-items: center; justify-content: space-between; padding: 0 5px 0 2px; flex: none; }
.sel:first-child { width: 58px; }
.row-c { height: 26px; padding: 2px 0 0 4px; background: #f5f4ec; }
.row-c .grip { margin-right: 8px; }
.row-c .it { gap: 2px; }
.row-c .it + .it { margin-left: 8px; }
.row-c .dd { margin-left: 8px; }
.row-c .dd-near { margin-left: 4px; }
.row-c .sep { margin: 0 6px 0 7px; }
.row-c .narrow { gap: 4px; }
.row-c .narrow .ic { width: 12px; margin-right: 1px; }
.blank { width: 43px; height: 20px; background: #fff; margin-left: 5px; flex: none; }
.row-c .blank + .dd { margin-left: 2px; margin-right: 9px; }
.row-c .active { border: 1px solid #3169c6; background: #d8e4f6; height: 22px; padding-left: 2px; margin-left: 4px; width: 53px; overflow: hidden; gap: 4px; }
.row-c .push { margin-right: 3px; }

.cad { display: block; width: 865px; height: 408px; flex: none; }
.cad-num text { font: 17px "Open Sans", sans-serif; fill: #c4c4c4; }

.status { height: 24px; flex: none; display: flex; align-items: center; padding-left: 4px; padding-top: 4px; background: #f5f4ec; white-space: nowrap; }
.status .grip { margin-right: 6px; }
.st { display: inline-flex; align-items: center; flex: none; }
.st-red { width: 15px; height: 4px; background: #d88; margin-right: 3px; }
.st-ortho { width: 48px; }
.st-box { height: 18px; border: 1px solid #3d6fb5; background: #eaf0f8; padding-right: 1px; }
.st-mark { width: 16px; height: 12px; border: 1px solid #a0a7b5; margin: 0 5px; border-top: 0; }
.st-mark.wide { border-top: 1px solid #a0a7b5; }
.st-a { width: 74px; } .st-b { width: 75px; margin-left: 1px; }
.g2 { margin-left: 2px; }
.st-x { width: 14px; margin: 0 4px 0 2px; color: #3d6fb5; font: 13px "DejaVu Sans", sans-serif; }
.st-c { margin-right: 4px; }
.st-d, .st-e { width: 51px; }
.st-f { margin-left: 5px; }
.g3 { margin-left: 11px; }
.st-g { width: 60px; }
.st-h { width: 14px; color: #666; margin-left: 3px; }
.spin { width: 58px; height: 18px; border: 1px solid #aaa; background: #f9f9f3; text-align: right; padding-right: 16px; margin-right: 19px; flex: none; }
.s-st { margin-left: -5px; margin-right: 4px; }
.chk { width: 11px; height: 11px; border: 1px solid #888; background: #fff; flex: none; margin-right: 9px; }
.status .push { margin-right: 4px; }

/* ---------- browser ---------- */
.browser { flex: 1; min-width: 0; display: flex; flex-direction: column; background: #f2f2f2; font-family: "Noto Sans CJK SC", sans-serif; overflow: hidden; }
.b-top { height: 5px; flex: none; background: #eee; }
.addr { height: 28px; flex: none; display: flex; background: #fff; border-top: 1px solid #c4c4c4; border-bottom: 1px solid #c4c4c4; }
.url { width: 289px; flex: none; display: flex; align-items: center; overflow: hidden; border-right: 1px solid #ddd; }
.url-t { flex: none; width: 247px; margin-left: -3px; overflow: hidden; white-space: nowrap; font: 14.200px/26px "Liberation Sans", sans-serif; color: #a5a5a5; }
.url-host { color: #333; font-size: 15px; }
.qr { width: 14px; height: 14px; margin-left: 5px; flex: none; }
.bolt { width: 12px; height: 14px; margin-left: 8px; flex: none; }
.chev { width: 25px; flex: none; display: flex; align-items: center; justify-content: center; border-right: 1px solid #ddd; }
.chev svg { width: 12px; height: 8px; }
.srch { flex: 1; display: flex; align-items: center; padding-left: 7px; }
.paw { width: 16px; height: 16px; flex: none; }
.paw-dd { margin: 10px 0 0 2px; border-width: 2px; border-top-width: 3px; border-bottom: 0; }
.srch-t { margin-left: 1px; font-size: 15px; color: #a8a8a8; }
.mag { width: 13px; height: 13px; margin-left: 28px; }

.btools { height: 36px; flex: none; display: flex; align-items: center; background: #f5f5f5; white-space: nowrap; font-size: 12px; color: #333; padding-left: 19px; overflow: hidden; }
.bgrip { width: 3px; height: 14px; border-left: 3px dotted #ccc; margin-right: 13px; flex: none; }
.bt { display: inline-flex; align-items: center; gap: 2px; flex: none; }
.bi { width: 16px; height: 16px; flex: none; }
.bd { margin: 0 11px 0 11px; border-top-color: #888; border-width: 3px; border-top-width: 4px; border-bottom: 0; }

.tabs { height: 28px; flex: none; display: flex; align-items: flex-end; background: #eee; position: relative; white-space: nowrap; font-size: 13px; }
.tab-old { width: 45px; height: 28px; flex: none; display: flex; align-items: center; justify-content: space-between; padding-right: 12px; color: #555; border-right: 1px solid #ddd; overflow: hidden; }
.tab-old-t { margin-left: -3px; }
.tab-x { font: 15px/15px "DejaVu Sans", sans-serif; color: #999; }
.tab { width: 221px; height: 28px; flex: none; display: flex; align-items: center; background: #fff; border: 1px solid #c0c0c0; border-bottom: 0; border-radius: 4px 4px 0 0; padding-left: 11px; color: #222; }
.fav { width: 16px; height: 16px; flex: none; margin-right: 4px; }
.tab-t { width: 166px; overflow: hidden; flex: none; }
.tab .tab-x { margin-left: 3px; }
.tab-plus { width: 26px; height: 28px; flex: none; text-align: center; font: 20px/26px "DejaVu Sans", sans-serif; color: #777; border-right: 1px solid #ddd; }
.tab-tools { margin-left: auto; height: 28px; display: flex; align-items: center; gap: 12px; margin-right: 9px; }
.tab-tools svg { width: 16px; height: 16px; }

.content { flex: 1; min-height: 0; display: flex; background: #fff; }
.inner { width: 444px; flex: none; overflow: hidden; padding-left: 15px; }
.pagebar { flex: 1; background: #eee; padding-top: 148px; }
.pagethumb { display: block; height: 207px; border-left: 1px solid #b9c8e8; margin-left: 2px; }
.q-title { height: 8px; display: flex; overflow: hidden; color: #1a1ac8; font-size: 13px; line-height: 16px; white-space: nowrap; }
.q-title span { margin-top: -8px; margin-left: 10px; }
.bullet { width: 4px; height: 4px; background: #e8b020; margin: 2px 0 0 11px; flex: none; }
.q-tag { height: 24px; display: flex; align-items: center; gap: 6px; margin-left: 6px; font-size: 12px; color: #333; }
.coin { width: 11px; height: 10px; background: #eeba30; border-radius: 3px; border: 1px solid #c8941a; }
.q-zero { color: #a33; margin-right: 1px; }
.card { margin-top: 5px; border-left: 1px solid #ccc; border-top: 1px solid #ccc; padding-left: 20px; height: 460px; }
.meta { height: 34px; display: flex; align-items: center; gap: 13px; color: #aaa; font-size: 12px; }
.body-t { margin: 0; font-size: 14px; line-height: 22px; height: 22px; white-space: nowrap; color: #222; }
.editor { margin-top: 41px; width: 420px; height: 286px; background: #e4f0fb; border: 1px solid #aac6e2; padding-left: 8px; }
.ed-head { height: 25px; padding-top: 8px; display: flex; align-items: center; gap: 5px; color: #345; font-size: 12px; }
.ed-ic { width: 14px; height: 12px; flex: none; }
.ed-box { height: 246px; background: #fff; border: 1px solid #aac6e2; padding: 8px 0 0 5px; color: #c8c8c8; font-size: 12px; white-space: nowrap; overflow: hidden; }
.ans { margin: 16px 0 0 -1px; font-size: 15px; line-height: 20px; font-weight: 700; color: #111; }

/* ---------- floating overlays ---------- */
.float-tb { position: absolute; left: 660px; top: 73px; width: 396px; height: 25px; display: flex; align-items: center; padding-left: 4px; background: #f5f4ec; border: 1px solid #8a887c; white-space: nowrap; }
.float-tb .it + .it { margin-left: 8px; }
.float-tb .dd { margin-left: 5px; }
.float-tb .dd + .it { margin-left: 9px; }
.float-tb .dd-b { margin-left: 4px; }
.float-tb .dd-b + .open { margin-left: 4px; }
.float-tb .open { height: 23px; border: 1px solid #8a887c; background: #f8f7f0; padding: 0 3px; gap: 2px; }
.float-tb .open .dd { margin-left: 3px; }
.float-tb .sep { margin: 0 7px 0 4px; }
.float-tb .sep + .it { margin-left: -2px; }
.float-more { position: absolute; left: 1044px; top: 52px; width: 12px; height: 22px; background: #f5f4ec; border: 1px solid #8a887c; border-bottom: 0; font: bold 12px/16px "Liberation Sans", sans-serif; text-align: center; }
.dropdown { position: absolute; left: 839px; top: 97px; width: 143px; height: 90px; padding: 0 0 0 25px; background: linear-gradient(90deg, #ece9d8 0 24px, #fdfcf6 24px); border: 1px solid #999; box-shadow: 2px 2px 2px rgba(0,0,0,.25); }
.dm { height: 22px; line-height: 22px; padding-left: 6px; white-space: nowrap; }

.arrows { position: absolute; left: 0; top: 0; width: 1510px; height: 574px; pointer-events: none; }
.arrow-lines line { stroke: #ea0d12; stroke-width: 3.200; marker-end: url(#head); }
```
